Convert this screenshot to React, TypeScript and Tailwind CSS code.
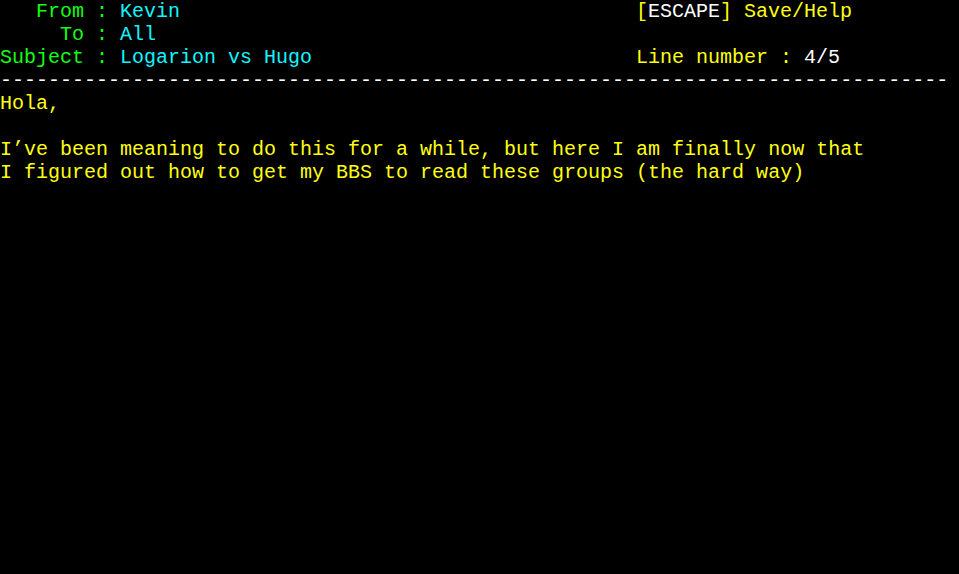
import React from "react";

const G = "text-[#11ff11]";
const C = "text-[#11f5ff]";
const Y = "text-[#ffff11]";
const W = "text-[#ffffff]";

function Row({ children }: { children?: React.ReactNode }) {
  return <div className="h-[23px] leading-[23px] whitespace-pre flex">{children}</div>;
}

export default function App() {
  const dashes = "-".repeat(79);
  return (
    <div
      className="w-[959px] h-[574px] bg-black overflow-hidden text-[20px]"
      style={{ fontFamily: '"Liberation Mono", "DejaVu Sans Mono", monospace' }}
    >
      <Row>
        <span className="w-[636px]">
          <span className={G}>{"   From : "}</span>
          <span className={C}>Kevin</span>
        </span>
        <span>
          <span className={Y}>[</span>
          <span className={W}>ESCAPE</span>
          <span className={Y}>] Save/Help</span>
        </span>
      </Row>
      <Row>
        <span className="w-[636px]">
          <span className={G}>{"     To : "}</span>
          <span className={C}>All</span>
        </span>
      </Row>
      <Row>
        <span className="w-[636px]">
          <span className={G}>{"Subject : "}</span>
          <span className={C}>Logarion vs Hugo</span>
        </span>
        <span>
          <span className={Y}>{"Line number : "}</span>
          <span className={W}>4/5</span>
        </span>
      </Row>
      <Row>
        <span className={W}>{dashes}</span>
      </Row>
      <Row>
        <span className={Y}>Hola,</span>
      </Row>
      <Row />
      <Row>
        <span className={Y}>I’ve been meaning to do this for a while, but here I am finally now that</span>
      </Row>
      <Row>
        <span className={Y}>I figured out how to get my BBS to read these groups (the hard way)</span>
      </Row>
    </div>
  );
}
